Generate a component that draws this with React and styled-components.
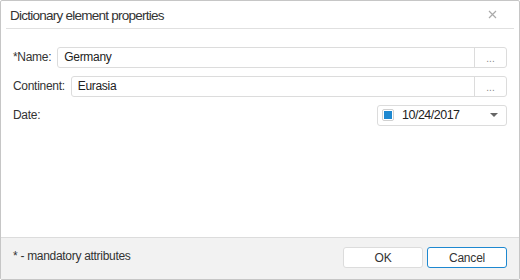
import React from 'react';
import styled, { createGlobalStyle } from 'styled-components';

const Global = createGlobalStyle`
  html, body {
    margin: 0;
    padding: 0;
    background: #fff;
  }
  * { box-sizing: border-box; }
`;

const Dialog = styled.div`
  width: 520px;
  height: 280px;
  display: flex;
  flex-direction: column;
  border: 1px solid #c6c6c6;
  border-radius: 2px;
  background: #fff;
  font-family: "Liberation Sans", Arial, sans-serif;
  font-size: 12px;
  letter-spacing: -0.3px;
  color: #333;
  overflow: hidden;
`;

const Header = styled.div`
  height: 28px;
  margin: 0 5px;
  padding: 0 4px 0 4px;
  display: flex;
  align-items: center;
  justify-content: space-between;
  border-bottom: 1px solid #e0e0e0;
  flex-shrink: 0;
`;

const Title = styled.div`
  font-size: 13.5px;
  letter-spacing: -0.75px;
  color: #333;
  padding-top: 1px;
`;

const Close = styled.span`
  width: 20px;
  display: flex;
  justify-content: center;
  margin-right: 8px;
`;

const Body = styled.div`
  flex: 1;
  padding: 18px 12px 0 12px;
  display: flex;
  flex-direction: column;
  gap: 9px;
`;

const Row = styled.div`
  display: flex;
  align-items: center;
  gap: 6px;
  height: 20px;
`;

const Label = styled.span`
  flex: ${p => (p.grow ? 1 : 'none')};
  color: #333;
`;

const InputGroup = styled.div`
  flex: 1;
  height: 21px;
  display: flex;
  border: 1px solid #dcdcdc;
  border-radius: 3px;
  overflow: hidden;
`;

const Field = styled.div`
  flex: 1;
  padding: 0 6px;
  display: flex;
  align-items: center;
  color: #222;
`;

const DotsButton = styled.div`
  width: 32px;
  border-left: 1px solid #dcdcdc;
  display: flex;
  align-items: center;
  justify-content: center;
  color: #888;
  font-size: 10px;
  letter-spacing: 0px;
  padding-top: 2px;
`;

const DatePicker = styled.div`
  width: 130px;
  height: 21px;
  border: 1px solid #dcdcdc;
  border-radius: 3px;
  display: flex;
  align-items: center;
  padding: 0 8px 0 4px;
  gap: 8px;
`;

const Check = styled.span`
  width: 12px;
  height: 12px;
  border: 1px solid #d0d0d0;
  border-radius: 2px;
  display: flex;
  align-items: center;
  justify-content: center;
  &::after {
    content: '';
    width: 8px;
    height: 8px;
    background: #1e88d0;
  }
`;

const DateText = styled.span`
  flex: 1;
  font-size: 12.5px;
  letter-spacing: -0.5px;
  color: #222;
`;

const Caret = styled.span`
  width: 0;
  height: 0;
  border-left: 4px solid transparent;
  border-right: 4px solid transparent;
  border-top: 4px solid #666;
`;

const Footer = styled.div`
  height: 42px;
  flex-shrink: 0;
  border-top: 1px solid #dcdcdc;
  background: #f2f2f2;
  display: flex;
  align-items: flex-start;
  justify-content: space-between;
  padding: 9px 12px 0 12px;
`;

const Note = styled.span`
  padding-top: 2px;
  color: #333;
`;

const Buttons = styled.div`
  display: flex;
  gap: 4px;
`;

const Button = styled.button`
  width: 80px;
  height: 21px;
  background: #fff;
  border: 1px solid ${p => (p.primary ? '#1e88d0' : '#dcdcdc')};
  border-radius: 3px;
  font-family: "Liberation Sans", Arial, sans-serif;
  font-size: 12px;
  letter-spacing: -0.2px;
  color: #333;
  padding: 0;
`;

export default function App() {
  return (
    <>
      <Global />
      <Dialog>
        <Header>
          <Title>Dictionary element properties</Title>
          <Close>
            <svg width="9" height="9" viewBox="0 0 9 9">
              <path d="M1 1 L8 8 M8 1 L1 8" stroke="#aaa" strokeWidth="1.2" />
            </svg>
          </Close>
        </Header>
        <Body>
          <Row>
            <Label>*Name:</Label>
            <InputGroup>
              <Field>Germany</Field>
              <DotsButton>...</DotsButton>
            </InputGroup>
          </Row>
          <Row>
            <Label>Continent:</Label>
            <InputGroup>
              <Field>Eurasia</Field>
              <DotsButton>...</DotsButton>
            </InputGroup>
          </Row>
          <Row>
            <Label grow>Date:</Label>
            <DatePicker>
              <Check />
              <DateText>10/24/2017</DateText>
              <Caret />
            </DatePicker>
          </Row>
        </Body>
        <Footer>
          <Note>* - mandatory attributes</Note>
          <Buttons>
            <Button>OK</Button>
            <Button primary>Cancel</Button>
          </Buttons>
        </Footer>
      </Dialog>
    </>
  );
}
